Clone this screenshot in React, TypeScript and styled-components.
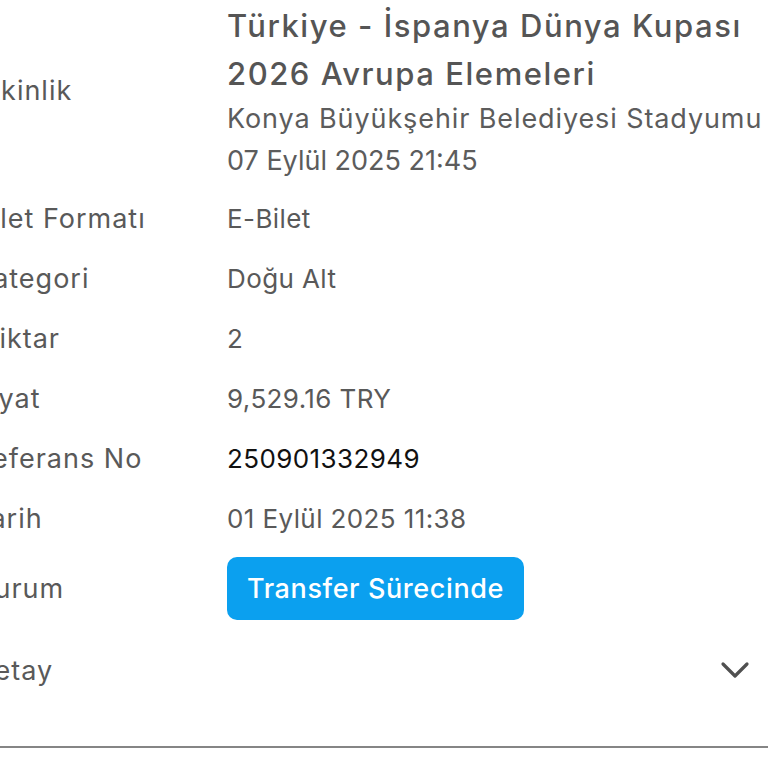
import styled, { createGlobalStyle } from "styled-components";

const Global = createGlobalStyle`
  html, body {
    margin: 0;
    padding: 0;
    background: #fff;
  }
  body {
    font-family: Inter, "Noto Sans", sans-serif;
    color: #565656;
    overflow: hidden;
  }
`;

const Page = styled.div`
  width: 768px;
  height: 768px;
  overflow: hidden;
  display: flex;
  flex-direction: column;
`;

const Table = styled.div`
  margin-left: -26px;
  display: grid;
  grid-template-columns: 253px 1fr;
  align-items: center;
`;

const Label = styled.div<{ $h?: number; $mb?: number }>`
  font-size: 27px;
  letter-spacing: 1px;
  color: #595959;
  height: ${(p) => p.$h || 60}px;
  margin-bottom: ${(p) => p.$mb || 0}px;
  display: flex;
  align-items: center;
  white-space: nowrap;
`;

const Value = styled.div<{ $h?: number; $dark?: boolean }>`
  font-size: 26px;
  letter-spacing: 0.4px;
  color: ${(p) => (p.$dark ? "#111" : "#595959")};
  height: ${(p) => p.$h || 60}px;
  display: flex;
  align-items: center;
  white-space: nowrap;
`;

const EventBlock = styled.div`
  height: 180px;
  margin-bottom: 8px;
  padding-top: 2px;
  box-sizing: border-box;
  display: flex;
  flex-direction: column;
`;

const Title = styled.div`
  font-size: 31px;
  font-weight: 500;
  letter-spacing: 1.55px;
  line-height: 48px;
  color: #555;
  white-space: nowrap;
`;

const Sub = styled.div<{ $spacing?: number }>`
  font-size: 27px;
  letter-spacing: ${(p) => p.$spacing ?? 0.9}px;
  line-height: 42px;
  color: #5c5c5c;
  white-space: nowrap;
`;

const Badge = styled.div`
  height: 63px;
  padding: 0 20px;
  display: flex;
  align-items: center;
  background: #0ba0ef;
  color: #fff;
  border-radius: 10px;
  font-size: 27px;
  letter-spacing: 0.6px;
  font-weight: 500;
`;

const DetailRow = styled.div`
  display: flex;
  align-items: center;
  justify-content: space-between;
  margin-left: -26px;
  padding-right: 18px;
  height: 84px;
`;

const Chevron = styled.svg`
  width: 30px;
  height: 18px;
`;

const Divider = styled.div`
  margin-top: 34px;
  height: 2px;
  background: #858585;
`;

export default function App() {
  return (
    <Page>
      <Global />
      <Table>
        <Label $h={180} $mb={8}>
          Etkinlik
        </Label>
        <EventBlock>
          <Title>
            Türkiye - İspanya Dünya Kupası
            <br />
            2026 Avrupa Elemeleri
          </Title>
          <Sub>Konya Büyükşehir Belediyesi Stadyumu</Sub>
          <Sub $spacing={0}>07 Eylül 2025 21:45</Sub>
        </EventBlock>
        <Label>Bilet Formatı</Label>
        <Value>E-Bilet</Value>
        <Label>Kategori</Label>
        <Value>Doğu Alt</Value>
        <Label>Miktar</Label>
        <Value>2</Value>
        <Label>Fiyat</Label>
        <Value>9,529.16 TRY</Value>
        <Label>Referans No</Label>
        <Value $dark>250901332949</Value>
        <Label>Tarih</Label>
        <Value>01 Eylül 2025 11:38</Value>
        <Label $h={80}>Durum</Label>
        <Value $h={80}>
          <Badge>Transfer Sürecinde</Badge>
        </Value>
      </Table>
      <DetailRow>
        <Label $h={84}>Detay</Label>
        <Chevron viewBox="0 0 30 18">
          <path d="M3 3 L15 15 L27 3" fill="none" stroke="#505050" strokeWidth="3.2" strokeLinecap="round" strokeLinejoin="round" />
        </Chevron>
      </DetailRow>
      <Divider />
    </Page>
  );
}
